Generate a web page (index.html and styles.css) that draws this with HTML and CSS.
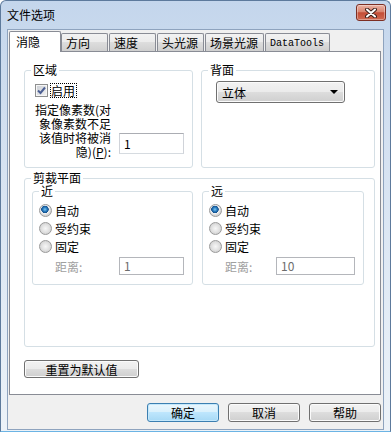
FILE: index.html
```html
<!DOCTYPE html>
<html lang="zh-CN">
<head>
  <meta charset="UTF-8" />
  <meta name="viewport" content="width=device-width, initial-scale=1" />
  <title>文件选项</title>
  <link rel="stylesheet" href="styles.css">
</head>
<body>

  <div class="window">
    <div class="titlebar">
      <span class="title">文件选项</span>
      <button class="close-btn" aria-label="关闭">
        <svg width="12" height="10" viewBox="0 0 12 10">
          <path d="M2 1.5 L10 8.5 M10 1.5 L2 8.5" stroke="#3b1f1a" stroke-width="4" stroke-linecap="round" />
          <path d="M2 1.5 L10 8.5 M10 1.5 L2 8.5" stroke="#fff" stroke-width="2" stroke-linecap="round" />
        </svg>
      </button>
    </div>

    <div class="client">
      <div class="tabs">
        <div class="tab active">消隐</div>
        <div class="tab">方向</div>
        <div class="tab">速度</div>
        <div class="tab">头光源</div>
        <div class="tab">场景光源</div>
        <div class="tab tab-mono">DataTools</div>
      </div>

      <div class="panel">
        <div class="top-row">
          <div class="group group-area">
            <span class="legend">区域</span>
            <label class="check-row">
              <span class="checkbox">
                <svg width="11" height="11" viewBox="0 0 11 11">
                  <path d="M2 5.5 L4.5 8 L9 2.5" fill="none" stroke="#4c5f93" stroke-width="2" />
                </svg>
              </span>
              <span class="focus">启用</span>
            </label>
            <div class="pixel-row">
              <div class="pixel-label">指定像素数(对<br>象像素数不足<br>该值时将被消<br>隐)(<u>P</u>):</div>
              <div class="textbox textbox-pixel">1</div>
            </div>
          </div>

          <div class="group group-back">
            <span class="legend">背面</span>
            <div class="combo">
              <span>立体</span>
              <span class="arrow"></span>
            </div>
          </div>
        </div>

        <div class="group group-clip">
          <span class="legend">剪裁平面</span>
          <div class="clip-cols">
            <div class="group sub near">
              <span class="legend">近</span>
              <div class="radio-row"><span class="radio checked"></span>自动</div>
              <div class="radio-row"><span class="radio"></span>受约束</div>
              <div class="radio-row"><span class="radio"></span>固定</div>
              <div class="dist-row">
                <span class="dist-label">距离:</span>
                <div class="textbox disabled">1</div>
              </div>
            </div>
            <div class="group sub far">
              <span class="legend">远</span>
              <div class="radio-row"><span class="radio checked"></span>自动</div>
              <div class="radio-row"><span class="radio"></span>受约束</div>
              <div class="radio-row"><span class="radio"></span>固定</div>
              <div class="dist-row">
                <span class="dist-label">距离:</span>
                <div class="textbox disabled">10</div>
              </div>
            </div>
          </div>
        </div>

        <button class="btn btn-reset">重置为默认值</button>
      </div>

      <div class="actions">
        <button class="btn default">确定</button>
        <button class="btn">取消</button>
        <button class="btn">帮助</button>
      </div>
    </div>
  </div>

</body>
</html>
```

FILE: styles.css
```css
* {
  box-sizing: border-box;
}

body {
  margin: 0;
  font-family: "Noto Sans CJK SC", "Noto Sans", sans-serif;
  font-size: 12px;
  color: #000;
  background: #fff;
}

.window {
  width: 391px;
  height: 432px;
  display: flex;
  flex-direction: column;
  border: 1px solid #5d7a9c;
  border-bottom-color: #6cb4e4;
  border-radius: 6px 6px 0 0;
  background: linear-gradient(#c4d6ec, #d3e0f0 30%, #e2ebf5 70%, #ecf2f8);
  overflow: hidden;
}

/* Title bar */
.titlebar {
  height: 28px;
  display: flex;
  align-items: flex-start;
  justify-content: space-between;
  padding: 0 4px 0 6px;
}

.title {
  line-height: 14px;
  margin-top: 7px;
}

.close-btn {
  width: 30px;
  height: 17px;
  margin-top: 3px;
  padding: 0;
  display: flex;
  align-items: center;
  justify-content: center;
  border: 1px solid #7d2f24;
  border-radius: 3px;
  background: linear-gradient(#eab2a4, #d98570 45%, #c44d36 52%, #cf6a52);
  box-shadow: inset 0 0 0 1px rgba(255,255,255,0.35);
}

/* Client area */
.client {
  flex: 1;
  margin: 0 6px 1px;
  border: 1px solid #8ea3be;
  background: #f0f0f0;
  padding: 1px 2px 0 1px;
}

.tabs {
  height: 20px;
  display: flex;
  align-items: flex-end;
  gap: 1px;
}

.tab {
  height: 18px;
  min-width: 47px;
  padding: 1px 5px 0 4px;
  line-height: 16px;
  border: 1px solid #898c95;
  border-bottom: none;
  border-radius: 2px 2px 0 0;
  background: linear-gradient(#f2f2f2, #ebebeb 50%, #dddddd 50%, #cfcfcf);
}

.tab.active {
  position: relative;
  z-index: 1;
  height: 21px;
  width: 52px;
  margin-right: -1px;
  margin-bottom: -1px;
  padding: 2px 6px 0;
  background: #fff;
}

.tab-mono {
  font-family: "Liberation Mono", "DejaVu Sans Mono", monospace;
  font-size: 10px;
  padding-left: 4px;
  padding-top: 2px;
}

.panel {
  height: 344px;
  border: 1px solid #898c95;
  background: #fff;
  padding: 18px 4px 0 14px;
}

/* Group boxes */
.group {
  position: relative;
  border: 1px solid #d5dfe5;
  border-radius: 3px;
}

.legend {
  position: absolute;
  top: -8px;
  left: 6px;
  padding: 0 2px;
  line-height: 14px;
  background: #fff;
}

.top-row {
  display: flex;
  gap: 8px;
}

.group-area {
  width: 169px;
  height: 98px;
  padding: 12px 0 0 9px;
}

.group-back {
  width: 174px;
  height: 98px;
  padding: 10px 0 0 14px;
}

.check-row {
  display: flex;
  align-items: center;
  gap: 2px;
  height: 15px;
}

.checkbox {
  width: 13px;
  height: 13px;
  margin-left: 1px;
  display: flex;
  align-items: center;
  justify-content: center;
  border: 1px solid #8e8f8f;
  background: linear-gradient(135deg, #c9cdd3, #f4f4f4);
  box-shadow: inset 0 0 0 1px #f6f6f6;
}

.focus {
  border: 1px dotted #000;
  line-height: 13px;
  padding: 0 1px 0 0;
}

.pixel-row {
  display: flex;
  margin-top: 5px;
}

.pixel-label {
  width: 77px;
  line-height: 14px;
  text-align: right;
}

.textbox {
  height: 19px;
  padding: 0 4px;
  line-height: 17px;
  border: 1px solid #abadb3;
  border-bottom-color: #d6dbe0;
  border-left-color: #d0d3d9;
  border-right-color: #d0d3d9;
  background: #fff;
}

.textbox-pixel {
  width: 65px;
  height: 21px;
  line-height: 19px;
  align-self: flex-end;
  margin: 0 0 5px 8px;
}

.textbox.disabled {
  color: #6d6d6d;
  border-color: #b4b6bb;
}

/* Combo box */
.combo {
  width: 129px;
  height: 22px;
  display: flex;
  align-items: center;
  justify-content: space-between;
  padding: 0 6px 0 5px;
  border: 1px solid #707070;
  border-radius: 3px;
  background: linear-gradient(#f2f2f2, #ebebeb 50%, #dddddd 50%, #cfcfcf);
  box-shadow: inset 0 0 0 1px #fbfbfb;
}

.arrow {
  width: 0;
  height: 0;
  border-left: 4px solid transparent;
  border-right: 4px solid transparent;
  border-top: 4px solid #000;
}

/* Clip planes */
.group-clip {
  width: 351px;
  height: 169px;
  margin-top: 10px;
  padding: 12px 0 0 7px;
}

.clip-cols {
  display: flex;
  gap: 9px;
}

.sub {
  height: 94px;
  padding: 9px 8px 0 6px;
}

.sub.near {
  width: 161px;
}

.sub.far {
  width: 162px;
}

.radio-row {
  height: 18px;
  display: flex;
  align-items: center;
  gap: 3px;
}

.radio {
  width: 13px;
  height: 13px;
  border-radius: 50%;
  border: 1px solid #9a9a9a;
  background: radial-gradient(circle at 50% 50%, #f7f7f7 0, #e6e6e6 3px, #d2d2d2 6px);
}

.radio.checked {
  background: radial-gradient(circle at 45% 40%, #7ccaf3 0, #2b7dc0 2px, #14508c 3.5px, #f2f2f2 4px, #d4d4d4 6px);
}

.dist-row {
  display: flex;
  align-items: center;
  margin-top: 2px;
  padding-left: 16px;
}

.dist-label {
  color: #a0a0a0;
  width: 64px;
}

.near .textbox {
  width: 65px;
  height: 18px;
  line-height: 16px;
}

.far .dist-label {
  width: 51px;
}

.far .textbox {
  flex: 1;
  height: 18px;
  line-height: 16px;
}

/* Buttons */
.btn {
  font: inherit;
  color: #000;
  padding: 0;
  height: 19px;
  width: 72px;
  line-height: 15px;
  border: 1px solid #707070;
  border-radius: 3px;
  background: linear-gradient(#f2f2f2, #ebebeb 50%, #dddddd 50%, #cfcfcf);
  box-shadow: inset 0 0 0 1px #fbfbfb;
}

.btn.default {
  border-color: #3c7fb1;
  background: linear-gradient(#eaf6fd, #d9f0fc 50%, #bee6fd 50%, #a7d9f5);
  box-shadow: inset 0 0 0 1px #c5e8fb;
}

.btn-reset {
  display: block;
  width: 115px;
  height: 18px;
  margin-top: 13px;
}

.actions {
  display: flex;
  justify-content: flex-end;
  gap: 9px;
  margin-top: 8px;
}
```
